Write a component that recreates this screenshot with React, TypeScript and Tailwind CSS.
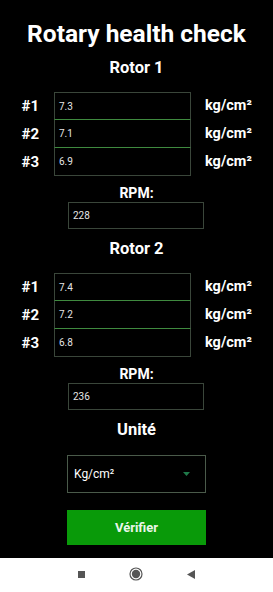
const font = { fontFamily: "Roboto, 'Liberation Sans', sans-serif" };

function Row({ label, value, index }: { label: string; value: string; index: number }) {
  const border =
    index === 0
      ? "border border-[#3a463a] border-b-[#3f8a3f]"
      : index === 1
      ? "border border-t-0 border-[#3a463a] border-b-[#3f8a3f]"
      : "border border-t-0 border-[#3a463a]";
  return (
    <div className="flex items-center h-[28px]">
      <div className="w-[54px] pr-[15px] text-right text-[15px] font-bold text-white">{label}</div>
      <div className={`w-[137px] h-full flex items-center pl-[4px] text-[10px] text-[#e6e6e6] ${border}`}>
        {value}
      </div>
      <div className="ml-[14px] text-[14.5px] font-bold text-white">kg/cm²</div>
    </div>
  );
}

function Rotor({ title, values, rpm }: { title: string; values: string[]; rpm: string }) {
  return (
    <div className="flex flex-col">
      <div className="text-center text-[16.5px] leading-[20px] font-bold text-white">{title}</div>
      <div className="mt-[14px] flex flex-col">
        {values.map((v, i) => (
          <Row key={i} label={`#${i + 1}`} value={v} index={i} />
        ))}
      </div>
      <div className="mt-[9px] text-center text-[14px] leading-[17px] font-bold text-white">RPM:</div>
      <div className="ml-[68px] w-[136px] h-[27px] flex items-center pl-[4px] text-[10px] text-[#e6e6e6] border border-[#3a463a]">
        {rpm}
      </div>
    </div>
  );
}

export default function App() {
  return (
    <div className="w-[273px] h-[592px] flex flex-col bg-black" style={font}>
      <div className="h-[558px] flex flex-col">
        <div className="mt-[20px] text-center text-[24.5px] leading-[28px] font-bold text-white">
          Rotary health check
        </div>
        <div className="mt-[10px]">
          <Rotor title="Rotor 1" values={["7.3", "7.1", "6.9"]} rpm="228" />
        </div>
        <div className="mt-[10px]">
          <Rotor title="Rotor 2" values={["7.4", "7.2", "6.8"]} rpm="236" />
        </div>
        <div className="mt-[10px] text-center text-[16.5px] leading-[20px] font-bold text-white">Unité</div>
        <div className="mt-[15px] ml-[67px] w-[139px] h-[38px] flex items-center justify-between pl-[6px] pr-[15px] border border-[#4a5a4a]">
          <span className="text-[12px] text-white">Kg/cm²</span>
          <svg width="7" height="4" viewBox="0 0 7 4">
            <path d="M0 0 L7 0 L3.5 4 Z" fill="#1f7a4a" />
          </svg>
        </div>
        <div className="mt-[17px] ml-[67px] w-[139px] h-[35px] flex items-center justify-center bg-[#099a09] text-[13px] font-bold text-[#eaf6ea]">
          Vérifier
        </div>
      </div>
      <div className="flex-1 bg-white flex items-center justify-center gap-[44px] pb-[2px]">
        <div className="w-[7px] h-[7px] bg-[#555]" />
        <svg width="14" height="14" viewBox="0 0 14 14">
          <circle cx="7" cy="7" r="6" fill="none" stroke="#555" strokeWidth="1.2" />
          <circle cx="7" cy="7" r="4.2" fill="#555" />
        </svg>
        <svg width="8" height="9" viewBox="0 0 8 9">
          <path d="M8 0 L8 9 L0 4.5 Z" fill="#555" />
        </svg>
      </div>
    </div>
  );
}
